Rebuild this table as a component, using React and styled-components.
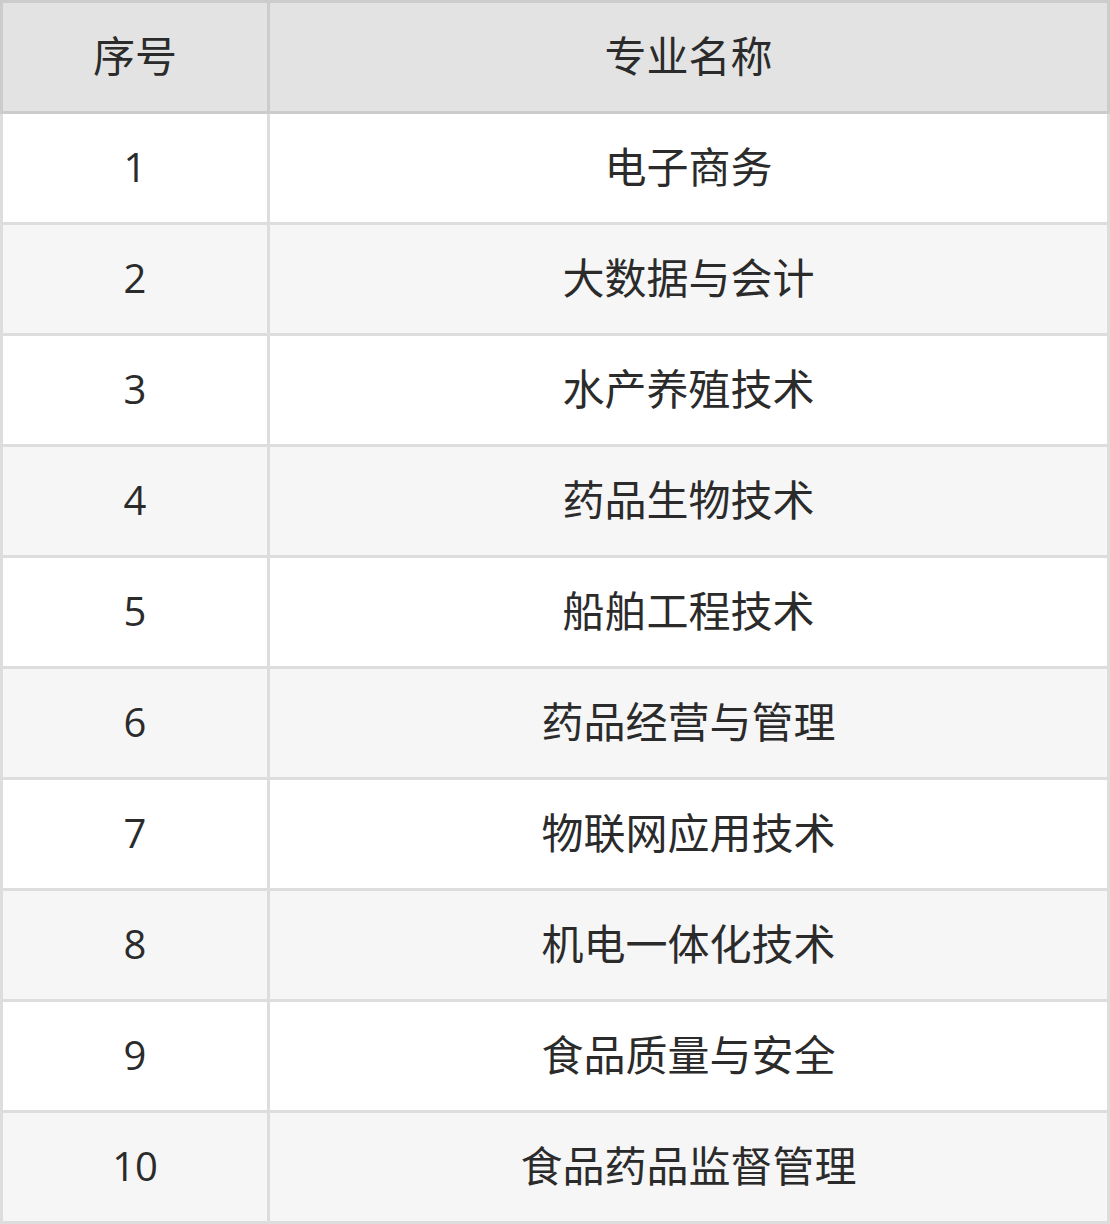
import React from 'react';
import styled, { createGlobalStyle } from 'styled-components';

const GlobalStyle = createGlobalStyle`
	html, body {
		margin: 0;
		padding: 0;
		background: #ffffff;
	}
	body {
		font-family: 'Open Sans', 'Noto Sans CJK SC', sans-serif;
		color: #2b2b2b;
	}
`;

const majors = [
	'电子商务',
	'大数据与会计',
	'水产养殖技术',
	'药品生物技术',
	'船舶工程技术',
	'药品经营与管理',
	'物联网应用技术',
	'机电一体化技术',
	'食品质量与安全',
	'食品药品监督管理',
];

const Table = styled.div`
	width: 1110px;
	display: flex;
	flex-direction: column;
`;

const Row = styled.div`
	display: grid;
	grid-template-columns: 270px 840px;
	background: ${(props) =>
		props.head ? '#e3e3e3' : props.striped ? '#f6f6f6' : '#ffffff'};
`;

const Cell = styled.div`
	box-sizing: border-box;
	height: ${(props) => (props.head ? '114px' : '111px')};
	display: flex;
	align-items: center;
	justify-content: center;
	line-height: 1;
	font-size: ${(props) => (props.cjk ? '42px' : '40px')};
	padding-bottom: 3px;
	border-right: 3px solid ${(props) => (props.head ? '#cccccc' : '#dddddd')};
	border-bottom: 3px solid ${(props) => (props.head ? '#cccccc' : '#dddddd')};
	border-top: ${(props) => (props.head ? '3px solid #cccccc' : '0')};
	border-left: ${(props) =>
		props.first ? `3px solid ${props.head ? '#cccccc' : '#dddddd'}` : '0'};
`;

export default function App() {
	return (
		<>
			<GlobalStyle />
			<Table>
				<Row head>
					<Cell head first cjk>序号</Cell>
					<Cell head cjk>专业名称</Cell>
				</Row>
				{majors.map((name, i) => (
					<Row key={name} striped={i % 2 === 1}>
						<Cell first>{i + 1}</Cell>
						<Cell cjk>{name}</Cell>
					</Row>
				))}
			</Table>
		</>
	);
}
